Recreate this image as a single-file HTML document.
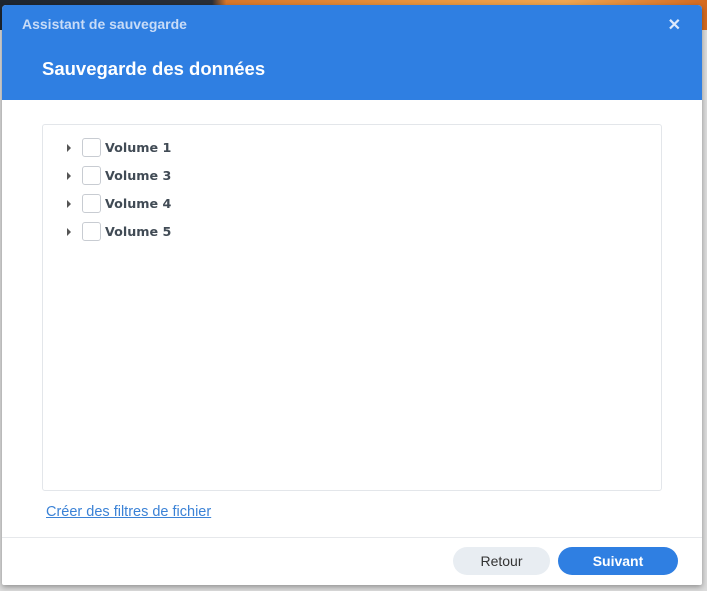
<!DOCTYPE html>
<html><head><meta charset="utf-8"><style>
*{margin:0;padding:0;box-sizing:border-box}
body{width:707px;height:591px;overflow:hidden;background:#dcdcdc;font-family:"Liberation Sans",sans-serif;position:relative}
.top{position:absolute;left:0;top:0;width:707px;height:30px;background:linear-gradient(90deg,#1e2630 0%,#2a2f38 30%,#d9772a 32%,#e9953e 60%,#f0a650 80%,#d46a20 100%)}
.dlg{position:absolute;left:2px;top:5px;width:700px;height:580px;background:#fff;border-radius:4px 4px 2px 2px;overflow:hidden;box-shadow:0 2px 6px rgba(0,0,0,.35)}
.hdr{height:95px;background:#2f7fe2;position:relative}
.t1{position:absolute;left:20px;top:11px;font-size:14px;font-weight:bold;color:#c9dcf7}
.x{position:absolute;right:21px;top:10px;font-size:16px;color:#dde9fb;font-weight:bold}
.t2{position:absolute;left:40px;top:53px;font-size:18.5px;font-weight:bold;color:#fff}
.panel{position:absolute;left:40px;top:119px;width:620px;height:367px;border:1px solid #e3e6ea;border-radius:3px}
.row{position:absolute;left:0;height:20px}
.tri{position:absolute;left:24px;top:6px;width:0;height:0;border-left:4px solid #555;border-top:4px solid transparent;border-bottom:4px solid transparent}
.cb{position:absolute;left:39px;top:0;width:19px;height:19px;border:1px solid #c8ccd2;border-radius:3px;background:#fff}
.lb{position:absolute;left:62px;top:2px;font-family:"DejaVu Sans",sans-serif;font-size:12.7px;font-weight:bold;color:#414b55;white-space:nowrap}
.link{position:absolute;left:44px;top:499px;font-size:14.5px;color:#3b82d6;text-decoration:underline}
.sep{position:absolute;left:0;top:532px;width:700px;height:1px;background:#e6e8eb}
.btn{position:absolute;top:542px;height:28px;border-radius:14px;font-size:14px;text-align:center;line-height:28px}
</style></head><body>
<div class="top"></div>
<div class="dlg">
<div class="hdr"><div class="t1">Assistant de sauvegarde</div><div class="x">✕</div><div class="t2">Sauvegarde des données</div></div>
<div class="panel">
<div class="row" style="top:13px"><div class="tri"></div><div class="cb"></div><div class="lb">Volume 1</div></div>
<div class="row" style="top:41px"><div class="tri"></div><div class="cb"></div><div class="lb">Volume 3</div></div>
<div class="row" style="top:69px"><div class="tri"></div><div class="cb"></div><div class="lb">Volume 4</div></div>
<div class="row" style="top:97px"><div class="tri"></div><div class="cb"></div><div class="lb">Volume 5</div></div>
</div>
<div class="link">Créer des filtres de fichier</div>
<div class="sep"></div>
<div class="btn" style="left:451px;width:97px;background:#e8edf2;color:#333">Retour</div>
<div class="btn" style="left:556px;width:120px;background:#2f7fe2;color:#fff;font-weight:bold">Suivant</div>
</div>
</body></html>
